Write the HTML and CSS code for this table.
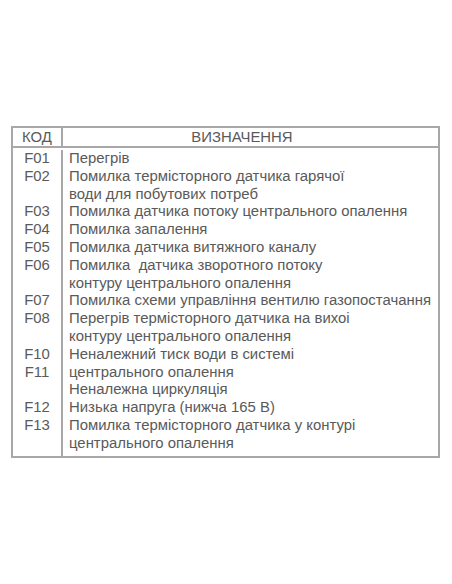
FILE: index.html
```html
<!DOCTYPE html>
<html lang="uk">
<head>
<meta charset="utf-8">
<link rel="stylesheet" href="styles.css">
</head>
<body>
<div class="codes">
  <div class="head code">КОД</div>
  <div class="head desc">ВИЗНАЧЕННЯ</div>
  <div class="code first">F01</div><div class="desc first">Перегрів</div>
  <div class="code">F02</div><div class="desc">Помилка термісторного датчика гарячої</div>
  <div class="code"></div><div class="desc">води для побутових потреб</div>
  <div class="code">F03</div><div class="desc">Помилка датчика потоку центрального опалення</div>
  <div class="code">F04</div><div class="desc">Помилка запалення</div>
  <div class="code">F05</div><div class="desc">Помилка датчика витяжного каналу</div>
  <div class="code">F06</div><div class="desc">Помилка&nbsp; датчика зворотного потоку</div>
  <div class="code"></div><div class="desc">контуру центрального опалення</div>
  <div class="code">F07</div><div class="desc">Помилка схеми управління вентилю газопостачання</div>
  <div class="code">F08</div><div class="desc">Перегрів термісторного датчика на вихоі</div>
  <div class="code"></div><div class="desc">контуру центрального опалення</div>
  <div class="code">F10</div><div class="desc">Неналежний тиск води в системі</div>
  <div class="code">F11</div><div class="desc">центрального опалення</div>
  <div class="code"></div><div class="desc">Неналежна циркуляція</div>
  <div class="code">F12</div><div class="desc">Низька напруга (нижча 165 В)</div>
  <div class="code">F13</div><div class="desc">Помилка термісторного датчика у контурі</div>
  <div class="code last"></div><div class="desc last">центрального опалення</div>
</div>
</body>
</html>
```

FILE: styles.css
```css
html, body {
  margin: 0;
  padding: 0;
  background: #ffffff;
}
body {
  padding: 126px 0 0 11px;
  font-family: "Liberation Sans", Arial, sans-serif;
  font-size: 14.9px;
  color: #5a5a5a;
}
.codes {
  width: 425px;
  border: 2px solid #a8a8a8;
  display: grid;
  grid-template-columns: 50px 1fr;
}
.code {
  border-right: 2px solid #a8a8a8;
  text-align: center;
  line-height: 17.8px;
  height: 17.8px;
}
.desc {
  padding-left: 6px;
  line-height: 17.8px;
  height: 17.8px;
  white-space: nowrap;
}
.head {
  height: 18px;
  line-height: 18px;
  border-bottom: 2px solid #a8a8a8;
}
.head.desc {
  text-align: center;
  padding-left: 0;
  padding-right: 17px;
}
.first {
  margin-top: 2px;
}
.last {
  padding-bottom: 3px;
}
```
